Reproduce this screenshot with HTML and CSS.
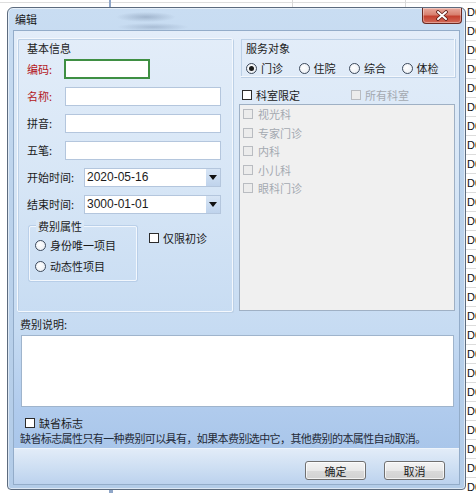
FILE: index.html
```html
<!DOCTYPE html>
<html lang="zh-CN">
<head>
<meta charset="utf-8">
<title>编辑</title>
<link rel="stylesheet" href="styles.css">
</head>
<body>
<div class="screen">
  <div class="dialog">
    <div class="titlebar">
      <span class="title">编辑</span>
      <span class="close"><svg width="14" height="11" viewBox="0 0 14 11"><path d="M3 2 L11 9 M11 2 L3 9" stroke="#5a1a14" stroke-width="3.6" stroke-linecap="round"/><path d="M3 2 L11 9 M11 2 L3 9" stroke="#ffffff" stroke-width="2" stroke-linecap="round"/></svg></span>
    </div>
    <div class="client">
      <div class="top">
        <div class="grp grp-left">
          <div class="grp-title">基本信息</div>
          <div class="form">
            <div class="row"><span class="lbl req">编码:</span><span class="input focus"></span></div>
            <div class="row"><span class="lbl req">名称:</span><span class="input wide"></span></div>
            <div class="row"><span class="lbl">拼音:</span><span class="input wide"></span></div>
            <div class="row"><span class="lbl">五笔:</span><span class="input wide"></span></div>
            <div class="row"><span class="lbl lbl-long">开始时间:</span><span class="combo"><span class="combo-text">2020-05-16</span><span class="combo-btn"><svg width="8" height="5" viewBox="0 0 8 5"><path d="M0 0 H8 L4 5 Z" fill="#111"/></svg></span></span></div>
            <div class="row"><span class="lbl lbl-long">结束时间:</span><span class="combo"><span class="combo-text">3000-01-01</span><span class="combo-btn"><svg width="8" height="5" viewBox="0 0 8 5"><path d="M0 0 H8 L4 5 Z" fill="#111"/></svg></span></span></div>
          </div>
          <div class="attr-row">
            <div class="subgrp">
              <span class="subgrp-title">费别属性</span>
              <div class="opt opt-1"><span class="radio"></span><span>身份唯一项目</span></div>
              <div class="opt opt-2"><span class="radio"></span><span>动态性项目</span></div>
            </div>
            <div class="opt first-visit"><span class="check"></span><span>仅限初诊</span></div>
          </div>
        </div>
        <div class="col-right">
          <div class="grp grp-service">
            <div class="grp-title">服务对象</div>
            <div class="radios">
              <div class="opt r-item"><span class="radio on"></span><span>门诊</span></div>
              <div class="opt r-item r-narrow"><span class="radio"></span><span>住院</span></div>
              <div class="opt r-item"><span class="radio"></span><span>综合</span></div>
              <div class="opt r-item"><span class="radio"></span><span>体检</span></div>
            </div>
          </div>
          <div class="dept-row">
            <div class="opt"><span class="check"></span><span>科室限定</span></div>
            <div class="opt disabled all-dept"><span class="check"></span><span>所有科室</span></div>
          </div>
          <div class="listbox">
            <div class="opt li disabled"><span class="check"></span><span>视光科</span></div>
            <div class="opt li disabled"><span class="check"></span><span>专家门诊</span></div>
            <div class="opt li disabled"><span class="check"></span><span>内科</span></div>
            <div class="opt li disabled"><span class="check"></span><span>小儿科</span></div>
            <div class="opt li disabled"><span class="check"></span><span>眼科门诊</span></div>
          </div>
        </div>
      </div>
      <div class="desc-label">费别说明:</div>
      <div class="textarea"></div>
      <div class="opt default-flag"><span class="check"></span><span>缺省标志</span></div>
      <div class="note">缺省标志属性只有一种费别可以具有，如果本费别选中它，其他费别的本属性自动取消。</div>
      <div class="buttonbar">
        <span class="btn">确定</span>
        <span class="btn">取消</span>
      </div>
    </div>
  </div>
  <div class="strip">
    <div class="cell">D0</div><div class="cell">D0</div><div class="cell">D0</div><div class="cell">D0</div>
    <div class="cell">D0</div><div class="cell">D0</div><div class="cell">D0</div><div class="cell">D0</div>
    <div class="cell">D0</div><div class="cell">D0</div><div class="cell">D0</div><div class="cell">D0</div>
    <div class="cell">D0</div><div class="cell">D0</div><div class="cell">D0</div><div class="cell">D0</div>
    <div class="cell">D0</div><div class="cell">D0</div><div class="cell">D0</div><div class="cell">D0</div>
    <div class="cell">D0</div><div class="cell">D0</div><div class="cell">D0</div><div class="cell">D0</div>
    <div class="cell">D0</div><div class="cell">D0</div>
  </div>
</div>
</body>
</html>
```

FILE: styles.css
```css
html, body {
  margin: 0;
  padding: 0;
  width: 476px;
  height: 493px;
  overflow: hidden;
  background: #ffffff;
}
body {
  font-family: "Noto Sans CJK SC", "Liberation Sans", sans-serif;
  font-size: 11px;
  color: #1b1b1b;
}
.screen {
  display: flex;
  align-items: flex-start;
  width: 476px;
  height: 493px;
  box-sizing: border-box;
  padding: 7px 0 0 7px;
  background:
    linear-gradient(90deg, transparent 109px, #8fa6c8 109px, #8fa6c8 111px, transparent 111px, transparent 292px, #d8d8d8 292px, #d8d8d8 293px, transparent 293px, transparent 405px, #d8d8d8 405px, #d8d8d8 406px, transparent 406px) 0 0 / 100% 7px no-repeat,
    linear-gradient(#ffffff 2px, #dedede 2px, #dedede 3px, #ffffff 3px) 0 0 / 100% 7px no-repeat,
    linear-gradient(90deg, transparent 109px, #8fa6c8 109px, #8fa6c8 113px, transparent 113px) 0 490px / 100% 3px no-repeat,
    #ffffff;
}

/* ---------- window frame ---------- */
.dialog {
  flex: none;
  width: 459px;
  height: 483px;
  box-sizing: border-box;
  border: 1px solid #5c6b7e;
  border-radius: 6px 6px 4px 4px;
  background: linear-gradient(#c9ddf2, #bcd3ec 40%, #b3cce8);
  box-shadow: inset 0 0 0 1px rgba(255,255,255,0.55);
  padding: 0 5px 4px 5px;
  display: flex;
  flex-direction: column;
}
.titlebar {
  height: 22px;
  display: flex;
  align-items: center;
  justify-content: space-between;
  background:
    radial-gradient(ellipse 30px 5px at 133px 9px, rgba(90,110,140,0.35), transparent),
    radial-gradient(ellipse 36px 4px at 140px 19px, rgba(90,110,140,0.28), transparent);
}
.title {
  margin-left: 2px;
  margin-top: -1px;
  color: #1a1a1a;
  line-height: 12px;
  font-size: 11px;
}
.close {
  align-self: flex-start;
  width: 40px;
  height: 16px;
  margin-right: -2px;
  box-sizing: border-box;
  border: 1px solid #6b2a22;
  border-top: none;
  border-radius: 0 0 4px 4px;
  background: linear-gradient(#e9a99d 0%, #d8806f 45%, #c4402f 55%, #d26a58 100%);
  box-shadow: inset 0 0 0 1px rgba(255,255,255,0.35);
  display: flex;
  align-items: center;
  justify-content: center;
}

/* ---------- client area ---------- */
.client {
  flex: none;
  height: 455px;
  box-sizing: border-box;
  border: 1px solid #93acc9;
  background: linear-gradient(#e3edf9 0px, #d7e6f6 150px, #c6dbf2 300px, #b0cbed 380px, #a9c6ea 418px);
  padding: 7px 3px 0 3px;
  display: flex;
  flex-direction: column;
}
.top {
  display: flex;
  gap: 4px;
  height: 274px;
}
.grp {
  box-sizing: border-box;
  border: 1px solid #f4f8fd;
  box-shadow: inset 1px 1px 0 #bcd0e6, 1px 1px 0 #bcd0e6;
}
.grp-title {
  height: 12px;
  line-height: 12px;
  white-space: nowrap;
}

/* left group */
.grp-left {
  width: 216px;
  height: 274px;
  padding: 3px 11px 0 9px;
  border-radius: 2px;
}
.form {
  margin-top: 5px;
  display: flex;
  flex-direction: column;
  gap: 7px;
}
.row {
  display: flex;
  align-items: center;
  height: 20px;
}
.lbl {
  width: 38px;
  flex: none;
  white-space: nowrap;
  line-height: 12px;
}
.lbl-long { width: 57px; }
.req { color: #b3171b; }
.input {
  height: 19px;
  box-sizing: border-box;
  background: #ffffff;
  border: 1px solid #b4c6dd;
}
.input.focus {
  width: 86px;
  height: 20px;
  margin-left: -1px;
  border: 2px solid #3f8f43;
}
.input.wide { width: 156px; }
.combo {
  width: 137px;
  height: 19px;
  box-sizing: border-box;
  background: #ffffff;
  border: 1px solid #b4c6dd;
  display: flex;
  align-items: center;
}
.combo-text {
  flex: 1;
  padding-left: 2px;
  font-family: "Liberation Sans", "Noto Sans CJK SC", sans-serif;
  font-size: 12px;
  line-height: 12px;
}
.combo-btn {
  width: 14px;
  height: 17px;
  background: linear-gradient(#d7e5f5, #bfd3ec);
  display: flex;
  align-items: center;
  justify-content: center;
}

.attr-row {
  display: flex;
  margin-top: 12px;
  margin-left: 2px;
}
.subgrp {
  width: 108px;
  height: 55px;
  box-sizing: border-box;
  border: 1px solid #f2f7fd;
  box-shadow: 0 0 0 1px rgba(170,195,225,0.6);
  border-radius: 2px;
  padding: 14px 0 0 5px;
  display: flex;
  flex-direction: column;
  gap: 9px;
}
.subgrp-title {
  margin: -21px 0 -2px 1px;
  align-self: flex-start;
  padding: 0 2px;
  background: #d9e7f6;
  line-height: 12px;
}
.opt {
  display: flex;
  align-items: center;
  gap: 4px;
  line-height: 12px;
  white-space: nowrap;
}
.first-visit {
  margin-left: 12px;
  margin-top: 6px;
  align-self: flex-start;
}

.radio {
  width: 11px;
  height: 11px;
  box-sizing: border-box;
  border-radius: 50%;
  border: 1px solid #3d4a5c;
  background: radial-gradient(circle at 40% 40%, #ffffff, #e6ebf1);
  display: inline-flex;
  align-items: center;
  justify-content: center;
  flex: none;
}
.radio.on::after {
  content: "";
  width: 5px;
  height: 5px;
  border-radius: 50%;
  background: #1a1a1a;
}
.check {
  width: 10px;
  height: 10px;
  box-sizing: border-box;
  border: 1px solid #2c2c2c;
  background: #ffffff;
  flex: none;
}

/* right column */
.col-right {
  width: 219px;
  display: flex;
  flex-direction: column;
}
.grp-service {
  margin-left: 3px;
  width: 215px;
  height: 39px;
  padding: 3px 0 0 5px;
  border-top-color: transparent;
  border-left-color: transparent;
}
.radios {
  display: flex;
  margin-top: 8px;
}
.r-item { width: 53px; }
.r-item.r-narrow { width: 51px; }
.dept-row {
  display: flex;
  margin-top: 12px;
  margin-left: 5px;
  height: 12px;
  align-items: center;
}
.all-dept { margin-left: 51px; }
.disabled { color: #a4a9b0; }
.disabled .check {
  border-color: #b9bcc1;
  background: #ececec;
}
.listbox {
  margin-top: 3px;
  margin-left: 2px;
  width: 216px;
  height: 207px;
  box-sizing: border-box;
  border: 1px solid #9fb0c4;
  background: #f0f0f0;
  padding-left: 3px;
}
.li {
  height: 18.5px;
  gap: 5px;
}

/* bottom */
.desc-label {
  margin-top: 6px;
  margin-left: 3px;
  line-height: 12px;
  height: 12px;
}
.textarea {
  margin-top: 5px;
  margin-left: 4px;
  width: 433px;
  height: 72px;
  box-sizing: border-box;
  background: #ffffff;
  border: 1px solid #9fb4cc;
}
.default-flag {
  margin-top: 10px;
  margin-left: 8px;
  height: 12px;
}
.note {
  margin-top: 3px;
  margin-left: 3px;
  height: 12px;
  line-height: 12px;
  white-space: nowrap;
  letter-spacing: -0.6px;
  color: #1f2a38;
}
.buttonbar {
  margin: 4px -3px 0 -3px;
  height: 36px;
  box-sizing: border-box;
  border-top: 1px solid #eef4fb;
  background: linear-gradient(#e2ecf8, #cbddf2 60%, #bcd2ee);
  display: flex;
  justify-content: flex-end;
  align-items: flex-start;
  gap: 18px;
  padding: 12px 14px 0 0;
}
.btn {
  width: 61px;
  height: 19px;
  box-sizing: border-box;
  border: 1px solid #707070;
  border-radius: 3px;
  background: linear-gradient(#f4f4f4, #e9e9e9 50%, #dadada 51%, #d2d2d2);
  box-shadow: inset 0 0 0 1px rgba(255,255,255,0.7);
  display: flex;
  align-items: center;
  justify-content: center;
  line-height: 12px;
  color: #222;
}

/* background table peeking at the right */
.strip {
  flex: none;
  width: 10px;
  height: 493px;
  margin-top: -7px;
  overflow: hidden;
  padding-top: 3px;
  box-sizing: border-box;
}
.cell {
  height: 18px;
  border-bottom: 1px solid #dcdcdc;
  font-family: "Liberation Sans", sans-serif;
  font-size: 11px;
  line-height: 18px;
  padding-left: 1px;
  white-space: nowrap;
  color: #111;
}
```
